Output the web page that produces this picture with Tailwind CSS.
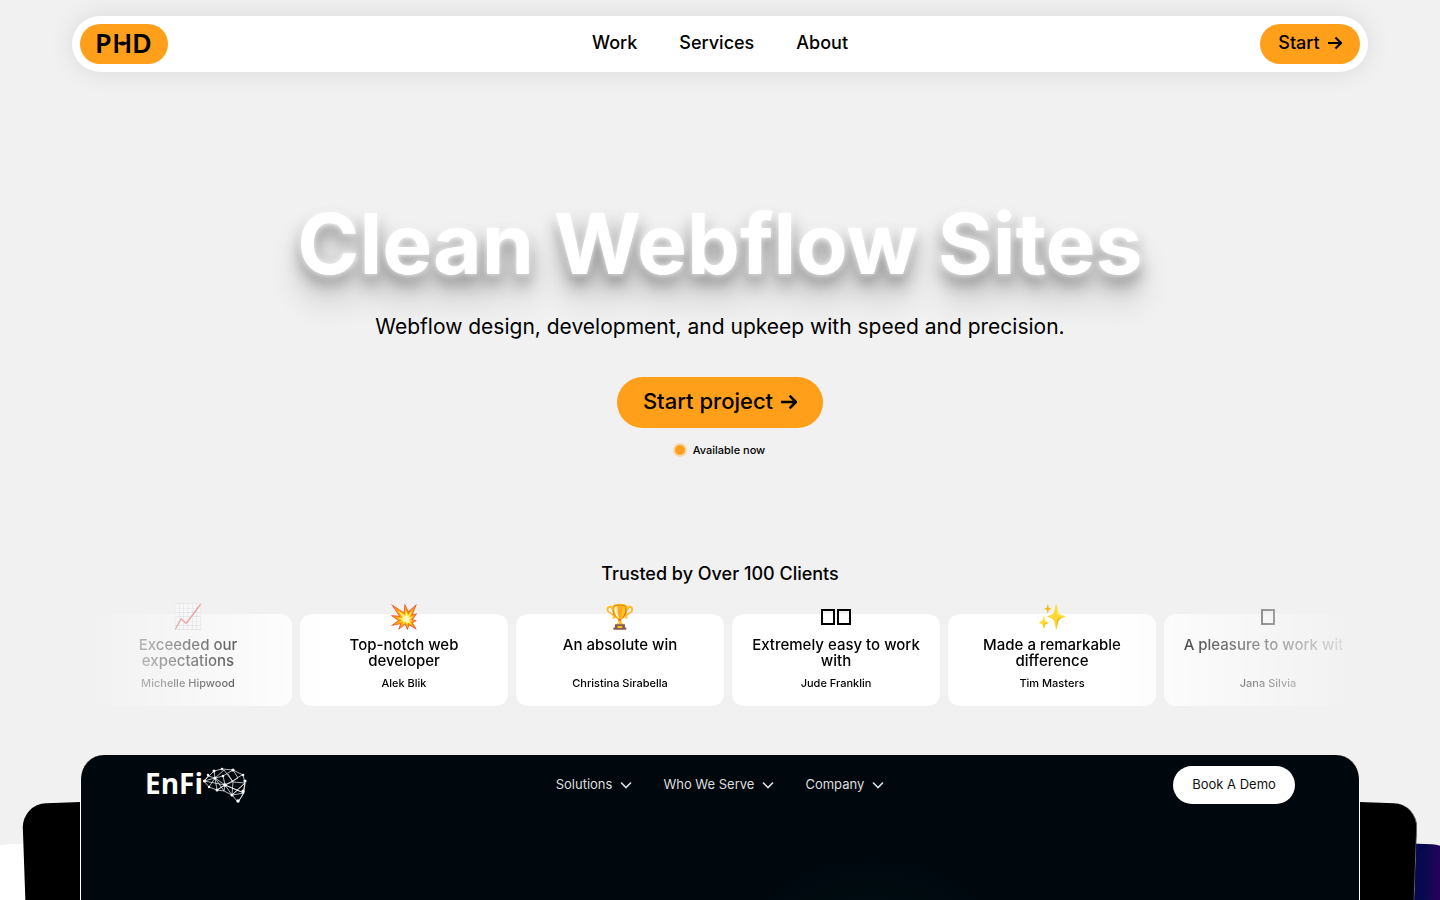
<!DOCTYPE html>
<html lang="en">

<head>
  <meta charset="UTF-8" />
  <meta name="viewport" content="width=device-width, initial-scale=1.0" />
  <title>PHD | Clean Webflow Sites</title>
  <script src="https://cdn.jsdelivr.net/npm/@tailwindcss/browser@4"></script>
</head>

<body class="h-screen overflow-hidden flex flex-col bg-[#f1f1f1] text-black font-['Inter',sans-serif]">
  <header class="px-18 pt-4">
    <div class="grid grid-cols-[1fr_auto_1fr] items-center h-14 p-2 bg-white rounded-full shadow-[0_0_24px_rgba(0,0,0,0.1)]">
      <a href="#" aria-label="PHD home" class="justify-self-start w-22 h-10 bg-[#ff9f1a] rounded-full">
        <svg viewBox="0 0 88 40" class="w-22 h-10">
          <text x="15 32 52" y="29" font-family="Noto Sans, sans-serif" font-size="27" font-weight="600">PHD</text>
          <path d="M38 15h8.500v3.500H38zM38 20.500h8.500v4H38z" fill="#ff9f1a" />
          <ellipse cx="42.500" cy="19.500" rx="3.500" ry="1.900" />
        </svg>
      </a>
      <nav class="flex gap-[42px] pb-0.5 text-lg font-medium">
        <a href="#work">Work</a>
        <a href="#services">Services</a>
        <a href="#about">About</a>
      </nav>
      <a href="#start" class="justify-self-end flex items-center justify-center gap-2 w-25 h-10 pb-0.5 bg-[#ff9f1a] rounded-full text-lg font-medium">
        Start
        <svg class="w-3.5 h-3.5" viewBox="0 0 14 14" fill="none" stroke="currentColor" stroke-width="2.200">
          <path d="M0 7h12.500M7.500 1.500L13 7l-5.500 5.500" />
        </svg>
      </a>
    </div>
  </header>

  <section class="flex flex-col items-center pt-[116px] text-center">
    <h1 class="text-[84px] leading-[112px] font-bold text-white whitespace-nowrap [text-shadow:0_0_6px_rgba(255,255,255,0.9),0_10px_16px_rgba(0,0,0,0.36),0_24px_32px_rgba(0,0,0,0.24)]">Clean Webflow Sites</h1>
    <p class="relative mt-[11px] text-[21px] leading-8">Webflow design, development, and upkeep with speed and precision.</p>
    <a href="#start" class="mt-[34px] flex items-center justify-center gap-2 w-[206px] h-[51px] pb-0.5 bg-[#ff9f1a] rounded-full text-[22px] font-medium">
      Start project
      <svg class="w-4 h-4" viewBox="0 0 14 14" fill="none" stroke="currentColor" stroke-width="2.200">
        <path d="M0 7h12.500M7.500 1.500L13 7l-5.500 5.500" />
      </svg>
    </a>
    <p class="mt-3 flex items-center gap-2 text-[11px] leading-5 font-medium">
      <span class="w-2.5 h-2.5 rounded-full bg-[#ff9f1a] ring-2 ring-[#ff9f1a]/30"></span>
      Available now
    </p>
  </section>

  <section class="pt-[100px]">
    <h2 class="text-center text-lg leading-7 font-medium">Trusted by Over 100 Clients</h2>
    <div class="mx-24 pt-[26px] overflow-hidden [mask-image:linear-gradient(to_right,rgba(0,0,0,0.08),black_240px,black_calc(100%-240px),rgba(0,0,0,0.08))]">
      <div class="flex gap-2 -ml-3 text-center">
        <article class="relative shrink-0 w-52 h-23 px-4 pt-[23px] bg-white rounded-xl">
          <span class="absolute inset-x-0 -top-[11px] text-2xl leading-7">📈</span>
          <h3 class="h-8 text-[15px] leading-4 font-medium">Exceeded our<br />expectations</h3>
          <p class="mt-1.5 text-[11px] leading-4 font-medium">Michelle Hipwood</p>
        </article>
        <article class="relative shrink-0 w-52 h-23 px-4 pt-[23px] bg-white rounded-xl">
          <span class="absolute inset-x-0 -top-[11px] text-2xl leading-7">💥</span>
          <h3 class="h-8 text-[15px] leading-4 font-medium">Top-notch web<br />developer</h3>
          <p class="mt-1.5 text-[11px] leading-4 font-medium">Alek Blik</p>
        </article>
        <article class="relative shrink-0 w-52 h-23 px-4 pt-[23px] bg-white rounded-xl">
          <span class="absolute inset-x-0 -top-[11px] text-2xl leading-7">🏆</span>
          <h3 class="h-8 text-[15px] leading-4 font-medium">An absolute win</h3>
          <p class="mt-1.5 text-[11px] leading-4 font-medium">Christina Sirabella</p>
        </article>
        <article class="relative shrink-0 w-52 h-23 px-4 pt-[23px] bg-white rounded-xl">
          <span class="absolute inset-x-0 -top-[5px] flex justify-center gap-0.5">
            <i class="w-3.5 h-4 border-2 border-black"></i>
            <i class="w-3.5 h-4 border-2 border-black"></i>
          </span>
          <h3 class="h-8 text-[15px] leading-4 font-medium">Extremely easy to work<br />with</h3>
          <p class="mt-1.5 text-[11px] leading-4 font-medium">Jude Franklin</p>
        </article>
        <article class="relative shrink-0 w-52 h-23 px-4 pt-[23px] bg-white rounded-xl">
          <span class="absolute inset-x-0 -top-[11px] text-2xl leading-7">✨</span>
          <h3 class="h-8 text-[15px] leading-4 font-medium">Made a remarkable<br />difference</h3>
          <p class="mt-1.5 text-[11px] leading-4 font-medium">Tim Masters</p>
        </article>
        <article class="relative shrink-0 w-52 h-23 px-4 pt-[23px] bg-white rounded-xl">
          <span class="absolute inset-x-0 -top-[5px] flex justify-center">
            <i class="w-3.5 h-4 border-2 border-black"></i>
          </span>
          <h3 class="h-8 text-[15px] leading-4 font-medium whitespace-nowrap">A pleasure to work with</h3>
          <p class="mt-1.5 text-[11px] leading-4 font-medium">Jana Silvia</p>
        </article>
      </div>
    </div>
  </section>

  <!-- Fanned stack of project previews -->
  <section class="relative flex-1 min-h-0 mt-[49px] px-20 overflow-hidden">
    <div class="absolute -left-4 top-[90px] w-1/2 h-[700px] origin-top-left -rotate-2 rounded-tl-3xl bg-white"></div>
    <div class="absolute -right-4 top-[90px] w-1/2 h-[700px] origin-top-right rotate-2 rounded-tr-3xl bg-linear-to-l from-[#28005c] from-2% to-[#080850] to-4%"></div>
    <div class="absolute left-[22px] top-[49px] w-1/2 h-[700px] origin-top-left -rotate-2 rounded-tl-3xl bg-black"></div>
    <div class="absolute right-[22px] top-[49px] w-1/2 h-[700px] origin-top-right rotate-2 rounded-tr-3xl bg-black border-r border-[#666]"></div>
    <div class="relative h-[700px] px-16 pt-2.5 rounded-3xl bg-[#00070d] bg-[radial-gradient(circle_at_790px_260px,#001418,#00070d_180px)] border-x border-white text-white">
      <div class="grid grid-cols-[1fr_auto_1fr] items-center">
        <a href="#enfi" class="flex items-center text-[28px] leading-9 font-bold font-['Open_Sans',sans-serif]">
          <span class="pb-1">EnFi</span>
          <svg class="w-11 h-9" viewBox="0 0 44 36" fill="none" stroke="white" stroke-width=".7">
            <path d="M1 14L11 4 19 2 30 3 40 8 42 16 41 26 35 35 29 28 21 24 14 23 6 20zM1 14l11-3 9-8 9 12 12 1M11 4l1 7 8-2 10-6 5 8-13 7-8 5-2-12 10 7 7-3 5-4 5-3M6 20l6-9 9 13 1-6 7 10 1-13M1 14l21 4 19 8M14 23l8-5 19 8-12 2 13-12M35 35l4-6 3-13-13 12M20 9l2 9M5 9l7 2M5 9l-4 5M25 7l5 8" />
            <g fill="white" stroke="none">
              <circle cx="1.500" cy="14" r="1.500" /><circle cx="11" cy="4" r="1.500" /><circle cx="19" cy="2" r="1.300" />
              <circle cx="30" cy="3" r="1.600" /><circle cx="40" cy="8" r="1.300" /><circle cx="42" cy="14" r="1.600" />
              <circle cx="12" cy="11" r="1.500" /><circle cx="22" cy="18" r="1.800" /><circle cx="14" cy="23" r="1.500" />
              <circle cx="29" cy="28" r="1.600" /><circle cx="40" cy="24" r="1.600" /><circle cx="35" cy="34" r="1.700" />
              <circle cx="20" cy="9" r="1.300" /><circle cx="5" cy="8" r="1.200" /><circle cx="6" cy="20" r="1.200" />
            </g>
          </svg>
        </a>
        <nav class="flex gap-[31px] text-[13px] text-[#dedede]">
          <a href="#solutions" class="flex items-center gap-2">Solutions
            <svg class="w-3 h-3" viewBox="0 0 12 12" fill="none" stroke="currentColor" stroke-width="1.600"><path d="M1 3.500l5 5 5-5" /></svg>
          </a>
          <a href="#serve" class="flex items-center gap-2">Who We Serve
            <svg class="w-3 h-3" viewBox="0 0 12 12" fill="none" stroke="currentColor" stroke-width="1.600"><path d="M1 3.500l5 5 5-5" /></svg>
          </a>
          <a href="#company" class="flex items-center gap-2">Company
            <svg class="w-3 h-3" viewBox="0 0 12 12" fill="none" stroke="currentColor" stroke-width="1.600"><path d="M1 3.500l5 5 5-5" /></svg>
          </a>
        </nav>
        <button type="button" class="justify-self-end w-[122px] h-[38px] bg-white rounded-full text-[13px] text-[#111]">Book A Demo</button>
      </div>
    </div>
  </section>
</body>

</html>
